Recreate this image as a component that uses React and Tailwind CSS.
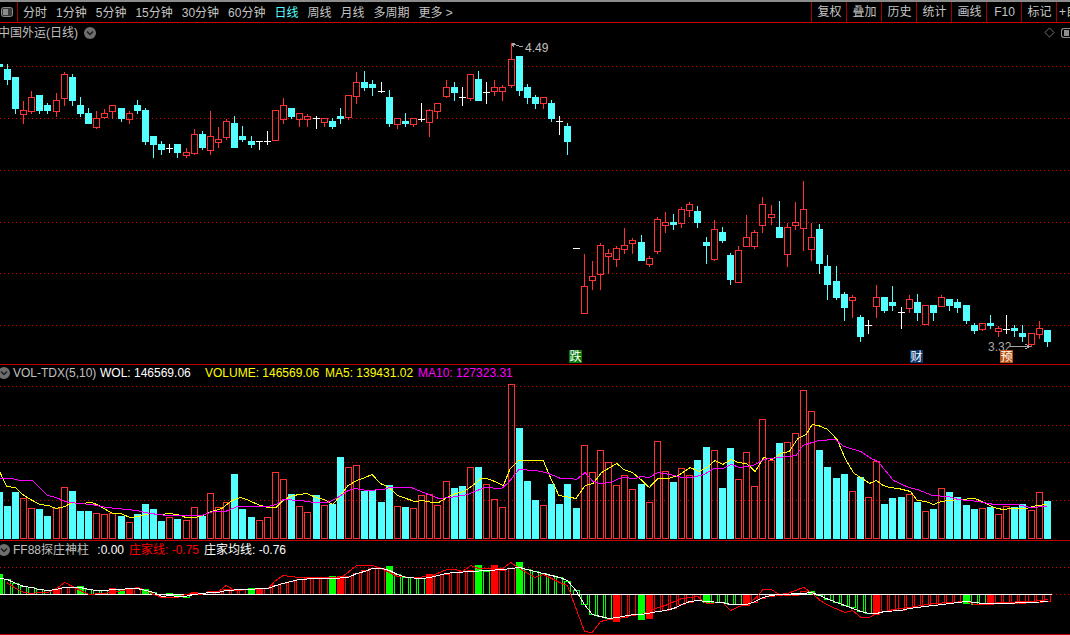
const CYAN = '#54ffff'
const RED = '#ff3232'
const GRID = '#d80000'

// [kind, high, bodyTop, bodyBottom, low] per trading day, in page pixels
const CANDLES = [
  ['c', 64, 64, 66, 66], ['c', 64, 69, 79, 84], ['c', 77, 77, 108, 113], ['r', 101, 110, 114, 123], ['r', 91, 97, 111, 113],
  ['c', 95, 95, 110, 113], ['c', 103, 105, 110, 113], ['r', 93, 100, 111, 116], ['r', 72, 74, 98, 105], ['c', 74, 77, 100, 105],
  ['c', 97, 105, 113, 116], ['c', 108, 113, 123, 123], ['r', 111, 118, 127, 128], ['r', 109, 113, 117, 118], ['r', 105, 105, 111, 118],
  ['c', 108, 108, 118, 121], ['r', 111, 113, 119, 123], ['c', 100, 105, 110, 113], ['c', 108, 110, 141, 144], ['c', 136, 136, 144, 157],
  ['c', 141, 144, 149, 154], ['w', 144, 148, 148, 152], ['c', 144, 144, 152, 157], ['r', 148, 152, 155, 157], ['r', 129, 134, 153, 154],
  ['c', 131, 134, 147, 149], ['r', 111, 136, 150, 154], ['r', 127, 139, 142, 147], ['r', 119, 121, 137, 139], ['c', 116, 123, 147, 147],
  ['c', 126, 136, 139, 141], ['c', 136, 141, 144, 147], ['w', 141, 141, 141, 149], ['w', 131, 141, 141, 144], ['r', 110, 110, 140, 140],
  ['r', 98, 105, 119, 123], ['c', 108, 108, 116, 118], ['r', 113, 113, 119, 126], ['r', 114, 116, 119, 126], ['w', 116, 118, 118, 128],
  ['r', 118, 118, 122, 126], ['c', 118, 121, 126, 128], ['c', 108, 116, 118, 123], ['r', 95, 95, 117, 119], ['r', 72, 82, 96, 103],
  ['c', 71, 82, 87, 90], ['c', 80, 84, 87, 95], ['w', 82, 91, 91, 92], ['c', 90, 97, 123, 126], ['r', 118, 118, 124, 128],
  ['c', 113, 121, 123, 126], ['r', 118, 118, 124, 126], ['w', 103, 119, 119, 121], ['r', 109, 110, 122, 136], ['r', 103, 103, 111, 118],
  ['r', 80, 87, 96, 97], ['c', 82, 87, 92, 100], ['w', 87, 97, 97, 105], ['r', 74, 74, 98, 100], ['c', 71, 79, 100, 100],
  ['w', 82, 92, 92, 103], ['r', 80, 87, 91, 95], ['r', 85, 87, 91, 100], ['r', 43, 59, 85, 87], ['c', 56, 56, 90, 95],
  ['c', 84, 87, 97, 103], ['c', 95, 97, 103, 108], ['r', 97, 97, 103, 108], ['c', 100, 103, 118, 121], ['w', 116, 121, 121, 134],
  ['c', 123, 126, 141, 154], ['w', 248, 248, 248, 248], ['r', 254, 286, 313, 313], ['r', 261, 276, 280, 289], ['r', 243, 245, 274, 289],
  ['r', 249, 253, 256, 273], ['r', 246, 248, 259, 266], ['r', 228, 245, 249, 253], ['r', 238, 240, 243, 253], ['c', 235, 242, 260, 260],
  ['r', 256, 258, 264, 266], ['r', 217, 219, 251, 253], ['r', 212, 222, 225, 232], ['c', 214, 222, 224, 229], ['r', 207, 209, 223, 227],
  ['r', 202, 204, 210, 216], ['c', 206, 211, 222, 227], ['c', 237, 242, 245, 263], ['r', 220, 229, 259, 260], ['c', 227, 232, 240, 242],
  ['c', 253, 255, 279, 284], ['r', 246, 250, 282, 282], ['r', 215, 237, 246, 246], ['r', 230, 232, 246, 248], ['r', 197, 204, 225, 232],
  ['r', 205, 214, 217, 224], ['c', 201, 227, 237, 237], ['r', 223, 227, 254, 266], ['r', 202, 222, 225, 229], ['r', 181, 209, 228, 250],
  ['r', 223, 237, 249, 260], ['c', 224, 229, 263, 273], ['c', 255, 266, 284, 299], ['c', 266, 281, 297, 299], ['c', 292, 294, 307, 320],
  ['r', 295, 297, 300, 317], ['c', 315, 317, 336, 341], ['w', 320, 325, 325, 333], ['r', 285, 297, 306, 317], ['c', 297, 297, 310, 312],
  ['c', 286, 302, 305, 310], ['w', 307, 312, 312, 328], ['r', 295, 299, 308, 312], ['c', 294, 302, 312, 320], ['r', 305, 305, 324, 324],
  ['c', 305, 305, 312, 320], ['r', 295, 297, 306, 306], ['c', 299, 299, 305, 310], ['c', 299, 302, 307, 312], ['c', 305, 305, 320, 323],
  ['c', 323, 325, 330, 333], ['r', 323, 323, 329, 330], ['c', 315, 323, 325, 328], ['r', 326, 328, 331, 336], ['w', 315, 329, 329, 333],
  ['c', 325, 328, 330, 336], ['c', 325, 333, 336, 341], ['r', 333, 333, 344, 346], ['r', 321, 328, 334, 338], ['c', 330, 330, 341, 346],
]

// volume bar tops; the bars stand on y=539
const VOL_TOPS = [
  492, 506, 492, 498, 508, 509, 516, 508, 487, 491, 511, 511, 513, 514, 513, 516, 522, 514, 504, 509, 521, 517, 519, 520, 507, 516,
  493, 507, 502, 474, 509, 517, 520, 517, 472, 479, 494, 506, 512, 495, 505, 504, 457, 467, 465, 491, 490, 502, 485, 506, 507, 508,
  495, 494, 505, 481, 488, 486, 467, 467, 484, 499, 507, 384, 428, 481, 500, 505, 484, 504, 484, 508, 445, 472, 450, 462, 485, 475,
  489, 484, 502, 441, 471, 482, 468, 475, 460, 447, 450, 488, 448, 479, 452, 486, 419, 460, 443, 442, 433, 390, 411, 450, 467, 478,
  474, 491, 477, 497, 461, 504, 498, 497, 494, 502, 511, 509, 488, 492, 497, 505, 509, 508, 507, 514, 506, 507, 504, 510, 492, 501,
]
const VOL_KINDS = [
  'ccc', 'rr', 'cc', 'rr', 'ccc', 'rrr', 'c', 'r', 'cccc', 'r', 'c', 'rr', 'c', 'rrr', 'ccc', 'rrrr', 'c', 'rr', 'c', 'r', 'cc', 'rr',
  'cccc', 'r', 'c', 'rrrrr', 'cc', 'r', 'c', 'rrrr', 'ccc', 'r', 'cccc', 'rrrrrrr', 'c', 'rrr', 'c', 'rr', 'cc', 'r', 'cc', 'rrrrr',
  'c', 'rrrr', 'cccc', 'r', 'c', 'rr', 'ccc', 'r', 'c', 'r', 'c', 'r', 'cccc', 'r', 'c', 'rr', 'cc', 'rr', 'c',
].join('')

// [x in 535ths of the left half, y]
const MA5_LEFT = [[0, 472], [20, 486], [45, 487], [70, 495], [95, 500], [118, 504], [142, 505], [165, 508], [190, 506], [212, 502], [235, 503], [270, 502], [295, 506], [330, 513], [355, 513], [380, 517], [405, 516], [440, 513], [470, 514], [495, 513], [520, 514], [545, 517], [570, 517], [595, 515], [620, 511], [650, 508], [680, 500], [705, 497], [730, 500], [755, 504], [785, 507], [808, 507], [830, 500], [850, 496], [875, 494], [900, 493], [925, 497], [950, 499], [975, 504], [1000, 494], [1020, 485], [1045, 480], [1070, 477], [1090, 474], [1115, 483], [1140, 487], [1165, 495], [1190, 498], [1215, 501], [1240, 500], [1265, 502], [1285, 502], [1310, 497], [1335, 493], [1360, 491], [1385, 485], [1410, 478], [1425, 478], [1450, 481], [1475, 485], [1495, 468], [1520, 460]]
const MA5_RIGHT = [[0, 460], [24, 460], [45, 477], [70, 495], [90, 496], [120, 498], [147, 485], [170, 483], [195, 472], [215, 468], [240, 463], [260, 469], [285, 472], [310, 479], [335, 487], [360, 478], [390, 478], [420, 475], [455, 467], [480, 471], [505, 467], [527, 460], [550, 464], [575, 459], [595, 462], [620, 463], [645, 471], [670, 457], [695, 459], [720, 453], [745, 451], [770, 438], [795, 434], [812, 424], [830, 425], [858, 429], [885, 439], [910, 459], [935, 473], [955, 477], [980, 483], [1000, 480], [1020, 485], [1040, 487], [1065, 488], [1100, 491], [1120, 500], [1145, 501], [1168, 504], [1190, 501], [1215, 500], [1240, 499], [1290, 498], [1315, 502], [1345, 507], [1370, 509], [1395, 508], [1440, 508], [1470, 505], [1500, 504]]
const MA10_LEFT = [[0, 478], [35, 478], [60, 480], [95, 480], [140, 495], [165, 497], [190, 501], [230, 503], [270, 504], [310, 507], [345, 508], [400, 510], [440, 513], [490, 515], [540, 515], [590, 515], [625, 511], [660, 511], [695, 506], [785, 506], [810, 504], [830, 499], [880, 500], [920, 502], [960, 502], [990, 497], [1020, 490], [1040, 488], [1075, 490], [1125, 489], [1140, 487], [1205, 487], [1240, 492], [1265, 495], [1285, 498], [1320, 497], [1370, 494], [1420, 487], [1470, 488], [1490, 482], [1520, 469]]
const MA10_RIGHT = [[0, 470], [30, 472], [55, 475], [75, 478], [105, 478], [122, 479], [147, 472], [170, 481], [190, 483], [220, 482], [255, 477], [295, 478], [310, 476], [335, 477], [360, 472], [395, 474], [430, 477], [460, 477], [495, 474], [525, 468], [550, 468], [575, 464], [600, 467], [640, 465], [670, 459], [715, 457], [765, 455], [785, 445], [830, 440], [880, 439], [905, 446], [955, 451], [985, 458], [1005, 461], [1050, 480], [1095, 487], [1120, 489], [1165, 495], [1210, 496], [1240, 499], [1300, 501], [1345, 504], [1415, 504], [1450, 507], [1500, 506]]

// histogram: G/R filled, g/r outlined, ends measured from the zero line y=594
const HIST_KINDS = [
  'Ggggggg', 'Rrr', 'G', 'ggg', 'R', 'G', 'R', 'r', 'G', 'grgGg', 'rrrrrrr', 'GR', 'rrrrrrrr', 'GR', 'rrrrr', 'G', 'gggg', 'R', 'rrrrr',
  'G', 'g', 'R', 'rr', 'G', 'ggggggg', 'gggg', 'R', 'rr', 'G', 'R', 'rrrrrr', 'G', 'gggg', 'R', 'rrrrrrr', 'G', 'g', 'gggggg', 'R',
  'rrrrrrrrrr', 'G', 'gg', 'R', 'rrrrrrr',
].join('')
const HIST_ENDS = [
  574, 579, 583, 586, 587, 589, 590, 589, 587, 587, 586, 589, 590, 590, 588, 589, 588, 588, 589, 592, 596, 593, 596, 597, 592, 593,
  591, 591, 589, 589, 589, 588, 588, 588, 585, 583, 581, 579, 578, 578, 578, 576, 576, 576, 573, 570, 568, 568, 566, 574, 577, 577,
  578, 574, 575, 574, 572, 571, 570, 565, 571, 565, 570, 568, 562, 569, 571, 573, 575, 577, 581, 590, 604, 614, 616, 618, 622, 617,
  615, 620, 619, 611, 610, 608, 604, 602, 600, 603, 602, 602, 604, 604, 606, 602, 598, 596, 595, 595, 595, 591, 591, 595, 599, 602,
  605, 607, 611, 613, 615, 611, 610, 610, 608, 607, 606, 605, 604, 603, 602, 604, 604, 604, 605, 603, 603, 603, 603, 602, 602, 601,
]

const AVG_LEFT = [[0, 578], [22, 579], [46, 583], [70, 586], [93, 587], [115, 589], [140, 590], [165, 589], [187, 587], [212, 587], [236, 587], [260, 589], [283, 590], [307, 590], [330, 589], [403, 588], [427, 590], [450, 592], [474, 596], [498, 595], [520, 596], [543, 596], [568, 594], [592, 593], [615, 592], [640, 592], [663, 590], [710, 589], [785, 588], [808, 585], [830, 583], [853, 581], [877, 579], [925, 578], [975, 578], [1020, 577], [1045, 573], [1068, 571], [1092, 568], [1118, 568], [1141, 570], [1165, 574], [1190, 577], [1236, 578], [1260, 577], [1283, 575], [1307, 573], [1332, 572], [1380, 571], [1427, 570], [1473, 569], [1497, 568], [1522, 567]]
const AVG_RIGHT = [[0, 571], [25, 573], [48, 575], [72, 577], [95, 580], [120, 590], [145, 604], [168, 614], [192, 616], [216, 618], [240, 617], [288, 614], [312, 614], [360, 611], [382, 610], [406, 608], [430, 604], [454, 601], [477, 600], [502, 601], [549, 602], [573, 604], [620, 604], [645, 601], [668, 597], [692, 595], [716, 594], [787, 593], [810, 592], [835, 595], [860, 599], [884, 602], [908, 605], [955, 611], [978, 613], [1001, 613], [1024, 611], [1072, 610], [1097, 608], [1168, 605], [1216, 603], [1265, 601], [1312, 603], [1360, 603], [1455, 602], [1502, 601]]
const DEALER_LEFT = [[20, 582], [46, 588], [70, 592], [93, 593], [115, 592], [140, 592], [165, 588], [190, 582], [212, 586], [236, 590], [260, 594], [330, 592], [403, 587], [427, 590], [450, 594], [474, 597], [520, 597], [543, 594], [568, 593], [592, 594], [615, 591], [640, 591], [663, 585], [687, 590], [785, 588], [808, 580], [830, 575], [877, 577], [925, 577], [1000, 577], [1045, 565], [1092, 565], [1118, 568], [1165, 576], [1212, 577], [1260, 576], [1310, 569], [1332, 569], [1355, 571], [1380, 565], [1403, 568], [1473, 568], [1497, 562], [1522, 568]]
const DEALER_RIGHT = [[0, 577], [25, 574], [48, 578], [72, 582], [95, 585], [105, 594], [120, 608], [145, 631], [168, 632], [192, 621], [216, 619], [240, 618], [262, 617], [288, 614], [312, 614], [360, 607], [382, 605], [430, 598], [477, 596], [502, 603], [549, 602], [573, 610], [597, 606], [620, 604], [645, 598], [668, 589], [692, 589], [716, 594], [740, 593], [787, 587], [810, 592], [835, 600], [860, 605], [908, 612], [931, 610], [955, 617], [978, 617], [1001, 613], [1048, 609], [1097, 607], [1168, 603], [1216, 602], [1265, 601], [1288, 604], [1312, 604], [1360, 602], [1455, 601], [1502, 599]]

const PERIODS = ['分时', '1分钟', '5分钟', '15分钟', '30分钟', '60分钟', '日线', '周线', '月线', '多周期', '更多 >']
const TOOLS = ['复权', '叠加', '历史', '统计', '画线', 'F10', '标记', '+自']

const dayX = (i) => Math.floor(-0.8 + 8.125 * i)
const linePoints = (left, right) =>
  [...left.map(([z, y]) => [z / 2.93, y]), ...right.map(([z, y]) => [535 + z / 2.93, y])]
    .map(([x, y]) => `${x.toFixed(1)},${y}.5`)
    .join(' ')

function DottedRow({ y, x2 = 1070 }) {
  return <line x1="0" x2={x2} y1={y + 0.5} y2={y + 0.5} stroke={GRID} strokeDasharray="1 3" />
}

function Candle({ candle, index }) {
  const [kind, high, top, bottom, low] = candle
  const x = dayX(index)
  if (kind === 'w') {
    return (
      <g stroke="#ffffff">
        <line x1={x + 0.5} x2={x + 0.5} y1={high} y2={low + 1} />
        <line x1={x - 3} x2={x + 4} y1={top + 0.5} y2={top + 0.5} />
      </g>
    )
  }
  const color = kind === 'c' ? CYAN : RED
  return (
    <g stroke={color}>
      {high < top && <line x1={x + 0.5} x2={x + 0.5} y1={high} y2={top} />}
      {low > bottom && <line x1={x + 0.5} x2={x + 0.5} y1={bottom} y2={low + 1} />}
      {kind === 'c' ? (
        <rect x={x - 3} y={top} width="7" height={bottom - top + 1} fill={color} stroke="none" />
      ) : (
        <rect x={x - 2.5} y={top + 0.5} width="6" height={bottom - top} fill="none" />
      )}
    </g>
  )
}

function HistBar({ kind, end, index }) {
  const x = dayX(index)
  const y = Math.min(end, 594)
  const h = Math.abs(end - 594)
  if (kind === 'G' || kind === 'R') {
    return <rect x={x - 3} y={y} width="7" height={h} fill={kind === 'G' ? '#00ff00' : '#ff0000'} />
  }
  return <rect x={x - 2.5} y={y + 0.5} width="6" height={h} fill="none" stroke={kind === 'g' ? '#00ff00' : '#ff0000'} />
}

function ChevronDot({ className = '' }) {
  return (
    <span className={`flex h-3 w-3 shrink-0 items-center justify-center rounded-full bg-[#6e6e6e] ${className}`}>
      <svg viewBox="0 0 12 12" className="h-3 w-3">
        <path d="M3 4.5 L6 7.5 L9 4.5" fill="none" stroke="#1c1c1c" strokeWidth="1.5" />
      </svg>
    </span>
  )
}

function Toolbar() {
  return (
    <div className="flex h-[21px] border-b border-[#c80000] text-[#c4c4c4]">
      <div className="flex w-[18px] shrink-0 items-center border-r border-[#a00000] pl-px">
        <svg viewBox="0 0 12 10" className="h-[10px] w-3">
          <rect x="0.5" y="0.5" width="11" height="9" rx="2" fill="#3a3a3a" stroke="#8c8c8c" />
          <rect x="2" y="2" width="5" height="6" fill="#8c8c8c" />
        </svg>
      </div>
      <div className="flex w-[793px] shrink-0 items-center gap-[9px] pt-[2px] pl-[5px]">
        {PERIODS.map((label) => (
          <span key={label} className={label === '日线' ? 'text-[#54ffff]' : ''}>
            {label}
          </span>
        ))}
      </div>
      <div className="flex">
        {TOOLS.map((label) => (
          <div
            key={label}
            className={`flex w-[35px] shrink-0 border-l border-[#a00000] pt-[3px] whitespace-nowrap ${
              label === '+自' ? 'justify-start pl-[2px]' : 'justify-center pl-px'
            }`}
          >
            {label}
          </div>
        ))}
      </div>
    </div>
  )
}

function Marker({ bg, left, children }) {
  return (
    <span
      className={`absolute top-[327px] flex h-[13px] w-[13px] items-center justify-center text-[12px] leading-none text-white ${bg} ${left}`}
    >
      {children}
    </span>
  )
}

function PricePanel() {
  return (
    <div className="relative flex h-[342px] flex-col border-b border-[#c00000]">
      <div className="-ml-[2px] flex h-[19px] shrink-0 items-center gap-[6px] whitespace-nowrap text-[#c0c0c0]">
        <span>中国外运(日线)</span>
        <ChevronDot />
        <svg viewBox="0 0 12 12" className="ml-auto h-[11px] w-[11px] shrink-0">
          <path d="M6 1 L11 6 L6 11 L1 6 Z" fill="none" stroke="#7a7a7a" />
        </svg>
        <span className="flex h-[10px] w-[9px] shrink-0 items-center rounded-l-[3px] border border-r-0 border-[#8c8c8c] pl-[2px]">
          <span className="h-[6px] w-[5px] bg-[#8c8c8c]" />
        </span>
      </div>
      <svg className="block" width="1070" height="322" viewBox="0 42 1070 322" shapeRendering="crispEdges">
        {[66, 118, 170, 222, 273, 325].map((y) => (
          <DottedRow key={y} y={y} />
        ))}
        {CANDLES.map((candle, i) => (
          <Candle key={i} candle={candle} index={i} />
        ))}
        <g stroke="#a8a8a8" fill="none">
          <path d="M512 44 L523 47 M512 44 L515 43 M512 44 L514 47" />
          <path d="M1010 346.5 L1030 346.5 M1025 344 L1030 346.5 L1025 349" />
        </g>
      </svg>
      <span className="absolute left-[525px] top-[18px] text-[#c0c0c0]">4.49</span>
      <span className="absolute left-[988px] top-[317px] text-[#a8a8a8]">3.32</span>
      <Marker bg="bg-[#0a7a0a]" left="left-[569px]">跌</Marker>
      <Marker bg="bg-[#0a3a6e]" left="left-[910px]">财</Marker>
      <Marker bg="bg-[#b8500f]" left="left-[1000px]">预</Marker>
    </div>
  )
}

function VolumePanel() {
  return (
    <div className="flex h-[176px] flex-col border-b border-[#c00000]">
      <div className="flex h-[16px] shrink-0 items-center whitespace-nowrap">
        <ChevronDot className="-ml-[2px] mr-[3px]" />
        <span className="w-[87px] shrink-0 text-[#c0c0c0]">VOL-TDX(5,10)</span>
        <span className="w-[105px] shrink-0 text-white">WOL: 146569.06</span>
        <span className="w-[120px] shrink-0 text-[#ffff00]">VOLUME: 146569.06</span>
        <span className="w-[93px] shrink-0 text-[#ffff00]">MA5: 139431.02</span>
        <span className="text-[#ff00ff]">MA10: 127323.31</span>
      </div>
      <svg className="block" width="1070" height="159" viewBox="0 381 1070 159" shapeRendering="crispEdges">
        {[386, 425, 462, 500].map((y) => (
          <DottedRow key={y} y={y} />
        ))}
        {VOL_TOPS.map((top, i) => {
          const x = dayX(i)
          return VOL_KINDS[i] === 'c' ? (
            <rect key={i} x={x - 3} y={top} width="7" height={539 - top} fill={CYAN} />
          ) : (
            <rect key={i} x={x - 2.5} y={top + 0.5} width="6" height={538 - top} fill="none" stroke={RED} />
          )
        })}
        <polyline points={linePoints(MA5_LEFT, MA5_RIGHT)} fill="none" stroke="#ffff00" />
        <polyline points={linePoints(MA10_LEFT, MA10_RIGHT)} fill="none" stroke="#ff00ff" />
      </svg>
    </div>
  )
}

function DealerPanel() {
  return (
    <div className="flex h-[94px] flex-col border-b border-[#c00000]">
      <div className="flex h-[17px] shrink-0 items-center whitespace-nowrap">
        <ChevronDot className="-ml-[2px] mr-[3px]" />
        <span className="w-[81px] shrink-0 text-[#c0c0c0]">FF88探庄神柱</span>
        <span className="w-[35px] shrink-0 text-white">&nbsp;:0.00</span>
        <span className="w-[75px] shrink-0 text-[#ff0000]">庄家线: -0.75</span>
        <span className="text-white">庄家均线: -0.76</span>
      </div>
      <svg className="block" width="1070" height="76" viewBox="0 558 1070 76" shapeRendering="crispEdges">
        <DottedRow y={567} />
        <DottedRow y={594} />
        {HIST_ENDS.map((end, i) => (
          <HistBar key={i} kind={HIST_KINDS[i]} end={end} index={i} />
        ))}
        <line x1="0" x2="1052" y1="594.5" y2="594.5" stroke="#ffffff" />
        <polyline points={linePoints(DEALER_LEFT, DEALER_RIGHT)} fill="none" stroke="#ff0000" />
        <polyline points={linePoints(AVG_LEFT, AVG_RIGHT)} fill="none" stroke="#ffffff" />
      </svg>
    </div>
  )
}

export default function App() {
  return (
    <div className="h-[635px] w-[1070px] overflow-hidden bg-black font-['Liberation_Sans','Noto_Sans_CJK_SC',sans-serif] text-[12px] leading-[14px]">
      <div className="h-[2px] bg-[#8c8c8c]" />
      <Toolbar />
      <PricePanel />
      <VolumePanel />
      <DealerPanel />
    </div>
  )
}
